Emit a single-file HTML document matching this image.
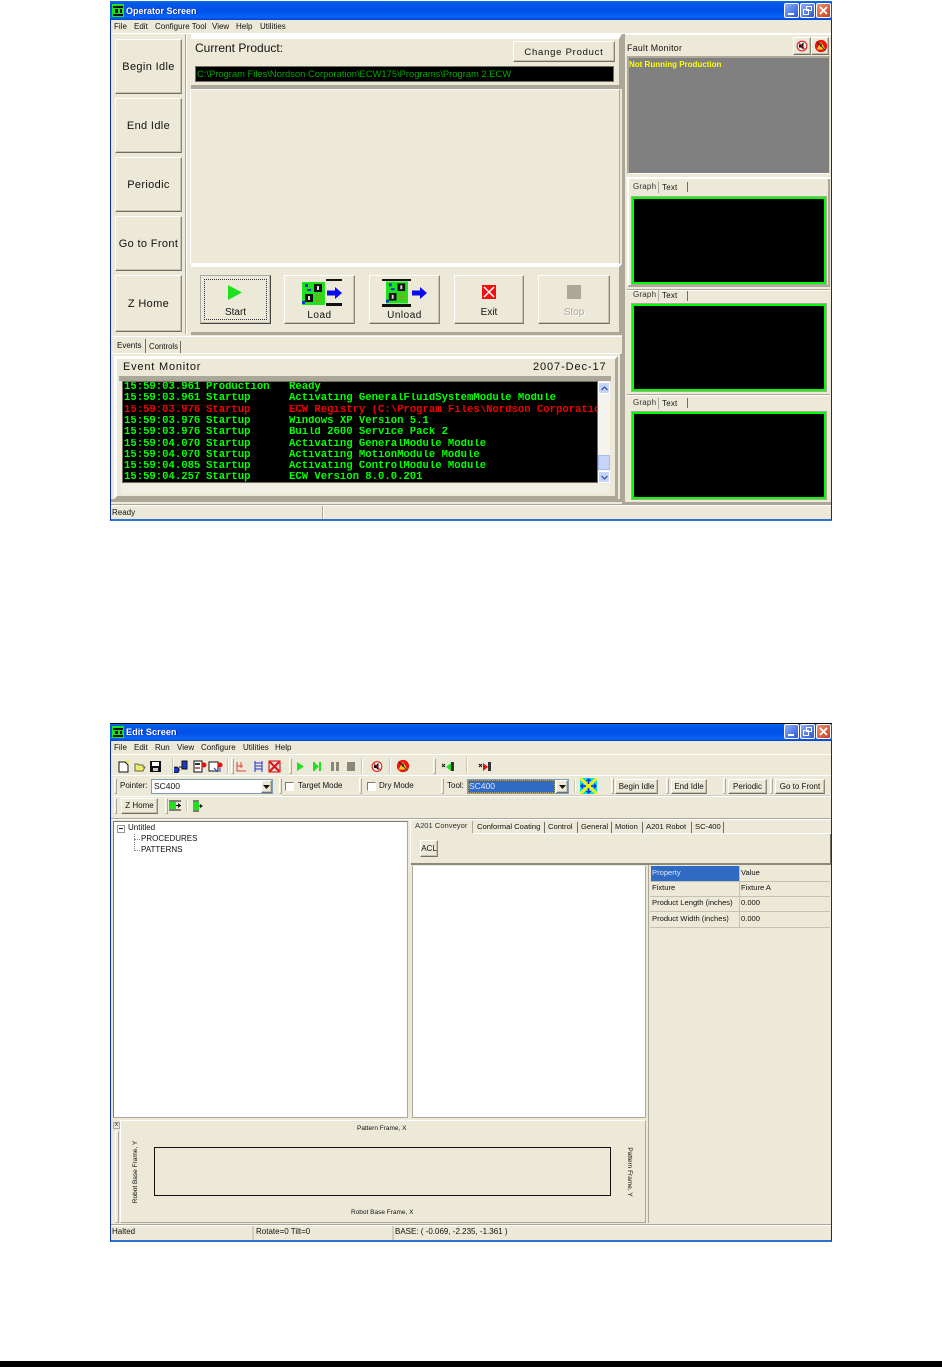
<!DOCTYPE html>
<html><head><meta charset="utf-8"><style>
html,body{margin:0;padding:0;background:#fff}
body{position:relative;width:942px;height:1367px;overflow:hidden;font-family:"Liberation Sans",sans-serif;font-size:8.5px;color:#111}
div,span,svg{position:absolute;box-sizing:border-box;white-space:nowrap}
.bg{background:#ece9d8}
.r{background:#ece9d8;border:1px solid;border-color:#fff #716f64 #716f64 #fff;box-shadow:inset -1px -1px #aca899}
.btn{background:#ece9d8;border:1px solid;border-color:#fff #8a8878 #716f64 #fff;box-shadow:inset -1px -1px #c5c2b2;text-align:center}
.big{font-size:11px;letter-spacing:.35px;display:flex;align-items:center;justify-content:center}
.s{border:1px solid;border-color:#7f7d70 #fff #fff #7f7d70}
.t{line-height:10px}
.title{color:#fff;font-weight:bold;font-size:9px;line-height:12px;text-shadow:1px 0 #0a2a9a}
.tb{background:linear-gradient(#0a70ee 0,#0458e6 12%,#0050ea 50%,#0764f4 85%,#0342cc 100%)}
.wb{width:15px;height:15px;border:1px solid #fff;border-radius:2px;background:linear-gradient(135deg,#8fb0f5,#2a56d8)}
.sep{width:2px;background:#c9c6b6;border-right:1px solid #fff}
.hd{width:3px;background:#ece9d8;border:1px solid;border-color:#fff #aca899 #aca899 #fff}
.row{left:124px;height:11px;font:bold 10.6px/11px "Liberation Mono",monospace;color:#0f0;width:473px;overflow:hidden}
.row span{position:absolute;top:0}
.g{background:#000;border:2px solid #0f0;outline:1px solid #aca899}
.p{font-size:7.6px}
</style></head><body>

<svg width="0" height="0" style="left:0;top:0"><defs>
<symbol id="board" viewBox="0 0 23 23"><rect width="23" height="23" fill="#1fe21f"/><rect x="12" y="2" width="8" height="8" fill="#111"/><rect x="15" y="4" width="2" height="4" fill="#ddd"/><rect x="3" y="12" width="8" height="8" fill="#111"/><rect x="6" y="14" width="2" height="4" fill="#ddd"/><rect x="3" y="2" width="3" height="3" fill="#1030d0"/><rect x="5" y="7" width="4" height="2" fill="#1030d0"/><rect x="0" y="19" width="3" height="3" fill="#1030d0"/><path d="M13 13h7M13 16h7M13 19h7" stroke="#c08020" stroke-width="1"/></symbol>
<symbol id="noaudio" viewBox="0 0 16 16"><circle cx="8" cy="8" r="6.5" fill="#eee" stroke="#e81010" stroke-width="1.4"/><path d="M4 6h3l3-3v10l-3-3H4z" fill="#111"/><path d="M3 3l10 10" stroke="#e81010" stroke-width="1"/></symbol>
<symbol id="nofault" viewBox="0 0 16 16"><circle cx="8" cy="8" r="7" fill="#f01010"/><path d="M8 3l5 9H3z" fill="#f2d020"/><path d="M8 5v4" stroke="#111" stroke-width="1.5"/><path d="M3 3l10 10" stroke="#111" stroke-width="1"/></symbol>
<symbol id="arrow" viewBox="0 0 15 12"><path d="M0 3.5h8V0l7 6-7 6V8.500H0z" fill="#0a0af0"/></symbol>
</defs></svg>

<!-- ============ WINDOW 1 ============ -->
<div class="bg" style="left:110px;top:1px;width:722px;height:520px;border:1px solid #0a2a9a;border-top:0;border-bottom:2px solid #2f71cd"></div>
<div class="tb" style="left:110px;top:1px;width:722px;height:19px"></div>
<svg style="left:112px;top:4px" width="12" height="13"><rect width="12" height="13" fill="#1fe21f"/><rect x="1" y="2" width="10" height="2" fill="#111"/><rect x="1" y="10" width="10" height="2" fill="#111"/><rect x="3" y="5" width="3" height="4" fill="#111"/><rect x="8" y="5" width="2" height="4" fill="#111"/></svg>
<div class="title" style="left:126px;top:5px">Operator Screen</div>
<div class="wb" style="left:784px;top:3px"><div style="left:3px;top:9px;width:6px;height:2px;background:#fff"></div></div>
<div class="wb" style="left:800px;top:3px"><div style="left:5px;top:2px;width:6px;height:5px;border:1px solid #fff"></div><div style="left:2px;top:5px;width:6px;height:6px;border:1px solid #fff"></div></div>
<div class="wb" style="left:816px;top:3px;background:linear-gradient(135deg,#e89878,#c83c18)"><svg style="left:2px;top:2px" width="9" height="9"><path d="M1 1l7 7M8 1l-7 7" stroke="#fff" stroke-width="1.700"/></svg></div>
<div class="t" style="left:114px;top:22px;font-size:8px">File</div>
<div class="t" style="left:134px;top:22px;font-size:8px">Edit</div>
<div class="t" style="left:155px;top:22px;font-size:8px">Configure Tool</div>
<div class="t" style="left:212px;top:22px;font-size:8px">View</div>
<div class="t" style="left:236px;top:22px;font-size:8px">Help</div>
<div class="t" style="left:260px;top:22px;font-size:8px">Utilities</div>
<div style="left:111px;top:33px;width:720px;height:1px;background:#fff"></div>

<div style="left:111px;top:34px;width:76px;height:300px;background:#ece9d8;border-right:2px solid #aca899"></div>
<div style="left:186px;top:34px;width:1px;height:300px;background:#fff"></div>
<div class="btn big" style="left:115px;top:39px;width:67px;height:55px">Begin Idle</div>
<div class="btn big" style="left:115px;top:98px;width:67px;height:55px">End Idle</div>
<div class="btn big" style="left:115px;top:157px;width:67px;height:55px">Periodic</div>
<div class="btn big" style="left:115px;top:216px;width:67px;height:55px">Go to Front</div>
<div class="btn big" style="left:115px;top:275px;width:67px;height:57px">Z Home</div>

<div style="left:191px;top:34px;width:431px;height:55px;background:#ece9d8;border-top:5px solid #fff;border-right:3px solid #aca899;border-bottom:4px solid #aca899"></div>
<div style="left:195px;top:42px;font-size:12px;line-height:13px">Current Product:</div>
<div class="btn" style="left:513px;top:41px;width:102px;height:21px;font-size:9.5px;line-height:21px;letter-spacing:.75px">Change Product</div>
<div style="left:195px;top:66px;width:419px;height:16px;background:#000;border:1px solid #716f64;color:#0a0;font-size:9.400px;line-height:13px;padding-left:1px">C:\Program Files\Nordson Corporation\ECW175\Programs\Program 2.ECW</div>
<div style="left:190px;top:89px;width:430px;height:175px;background:#ece9d8;border:1px solid;border-color:#fff #aca899 #fff #fff"></div>
<div style="left:191px;top:264px;width:431px;height:71px;background:#ece9d8;border-top:3px solid #fff;border-right:3px solid #aca899;border-bottom:3px solid #aca899"></div>

<div class="btn" style="left:200px;top:275px;width:71px;height:49px;border:1px solid #444;border-top-color:#aaa;border-left-color:#aaa"><div style="left:3px;top:3px;right:3px;bottom:3px;border:1px dotted #333"></div></div>
<svg style="left:228px;top:285px" width="15" height="15"><path d="M0 0l14 7.500L0 15z" fill="#1fe21f"/></svg>
<div class="t" style="left:200px;width:71px;top:308px;text-align:center;font-size:10px">Start</div>

<div class="btn" style="left:284px;top:275px;width:71px;height:49px"></div>
<svg style="left:302px;top:281px" width="23" height="25"><use href="#board"/></svg>
<div style="left:326px;top:279px;width:16px;height:2px;background:#111"></div><div style="left:326px;top:303px;width:16px;height:3px;background:#111"></div>
<svg style="left:327px;top:287px" width="15" height="12"><use href="#arrow"/></svg>
<div class="t" style="left:284px;width:71px;top:311px;text-align:center;font-size:10px;letter-spacing:.5px">Load</div>

<div class="btn" style="left:369px;top:275px;width:71px;height:49px"></div>
<div style="left:382px;top:279px;width:29px;height:2px;background:#111"></div><div style="left:382px;top:304px;width:29px;height:3px;background:#111"></div>
<svg style="left:386px;top:281px" width="22" height="23"><use href="#board"/></svg>
<svg style="left:412px;top:287px" width="15" height="12"><use href="#arrow"/></svg>
<div class="t" style="left:369px;width:71px;top:311px;text-align:center;font-size:10px;letter-spacing:.5px">Unload</div>

<div class="btn" style="left:454px;top:275px;width:70px;height:49px"></div>
<svg style="left:482px;top:285px" width="14" height="14"><rect width="14" height="14" fill="#f01010"/><path d="M2 2l10 10M12 2L2 12" stroke="#fff" stroke-width="1.500"/></svg>
<div class="t" style="left:454px;width:70px;top:308px;text-align:center;font-size:10px">Exit</div>

<div class="btn" style="left:538px;top:275px;width:72px;height:49px"></div>
<div style="left:567px;top:285px;width:14px;height:14px;background:#aca899"></div>
<div class="t" style="left:538px;width:72px;top:308px;text-align:center;font-size:10px;color:#aca899;text-shadow:1px 1px #fff">Stop</div>

<!-- events -->
<div style="left:111px;top:353px;width:512px;height:149px;background:#ece9d8;border-top:1px solid #fff;border-right:3px solid #aca899;border-bottom:3px solid #aca899"></div>
<div class="t" style="left:117px;top:341px;font-size:8px">Events</div>
<div style="left:145px;top:339px;width:1px;height:14px;background:#716f64"></div>
<div class="t" style="left:149px;top:342px;font-size:7.800px">Controls</div>
<div style="left:180px;top:341px;width:1px;height:12px;background:#716f64"></div>
<div style="left:111px;top:336px;width:511px;height:1px;background:#fff"></div>
<div style="left:114px;top:356px;width:504px;height:143px;border:3px solid;border-color:#fff #aca899 #aca899 #fff"></div>
<div style="left:123px;top:361px;font-size:11px;line-height:13px;letter-spacing:.8px">Event Monitor</div>
<div style="left:533px;top:361px;font-size:11px;line-height:13px;letter-spacing:.9px">2007-Dec-17</div>
<div style="left:119px;top:376px;width:492px;height:5px;background:#aca899"></div>
<div style="left:122px;top:381px;width:476px;height:102px;background:#000;border:1px solid #716f64"></div>
<div class="row" style="top:382px"><span style="left:0">15:59:03.961</span><span style="left:82px">Production</span><span style="left:165px">Ready</span></div>
<div class="row" style="top:393px"><span style="left:0">15:59:03.961</span><span style="left:82px">Startup</span><span style="left:165px">Activating GeneralFluidSystemModule Module</span></div>
<div class="row" style="top:405px;color:#f00000"><span style="left:0">15:59:03.976</span><span style="left:82px">Startup</span><span style="left:165px">ECW Registry (C:\Program Files\Nordson Corporation</span></div>
<div class="row" style="top:416px"><span style="left:0">15:59:03.976</span><span style="left:82px">Startup</span><span style="left:165px">Windows XP Version 5.1</span></div>
<div class="row" style="top:427px"><span style="left:0">15:59:03.976</span><span style="left:82px">Startup</span><span style="left:165px">Build 2600 Service Pack 2</span></div>
<div class="row" style="top:439px"><span style="left:0">15:59:04.070</span><span style="left:82px">Startup</span><span style="left:165px">Activating GeneralModule Module</span></div>
<div class="row" style="top:450px"><span style="left:0">15:59:04.070</span><span style="left:82px">Startup</span><span style="left:165px">Activating MotionModule Module</span></div>
<div class="row" style="top:461px"><span style="left:0">15:59:04.085</span><span style="left:82px">Startup</span><span style="left:165px">Activating ControlModule Module</span></div>
<div class="row" style="top:472px"><span style="left:0">15:59:04.257</span><span style="left:82px">Startup</span><span style="left:165px">ECW Version 8.0.0.201</span></div>
<div style="left:598px;top:381px;width:12px;height:102px;background:#f4f3ee"></div>
<div style="left:598px;top:382px;width:12px;height:12px;background:#c5d5f8;border:1px solid #fff"><svg style="left:2px;top:3px" width="7" height="5"><path d="M0.500 4l3-3 3 3" fill="none" stroke="#3a5a9a" stroke-width="1.300"/></svg></div>
<div style="left:598px;top:455px;width:12px;height:15px;background:#c5d5f8;border:1px solid #a8bcee"></div>
<div style="left:598px;top:471px;width:12px;height:12px;background:#c5d5f8;border:1px solid #fff"><svg style="left:2px;top:3px" width="7" height="5"><path d="M0.500 1l3 3 3-3" fill="none" stroke="#3a5a9a" stroke-width="1.300"/></svg></div>
<div style="left:121px;top:484px;width:489px;height:10px;background:#f1efe3"></div>

<!-- status 1 -->
<div style="left:111px;top:504px;width:720px;height:1px;background:#aca899"></div>
<div style="left:111px;top:505px;width:720px;height:1px;background:#fff"></div>
<div class="t" style="left:112px;top:508px;font-size:8px">Ready</div>
<div style="left:322px;top:506px;width:2px;height:13px;background:#aca899;border-right:1px solid #fff"></div>

<!-- right col -->
<div style="left:622px;top:34px;width:3px;height:470px;background:#aca899"></div>
<div style="left:626px;top:34px;width:205px;height:1px;background:#fff"></div>
<div class="t" style="left:627px;top:43px;font-size:8.800px;letter-spacing:.3px">Fault Monitor</div>
<div class="btn" style="left:793px;top:37px;width:18px;height:18px"></div>
<div class="btn" style="left:811px;top:37px;width:18px;height:18px"></div>
<svg style="left:796px;top:40px" width="12" height="12"><use href="#noaudio"/></svg>
<svg style="left:814px;top:39px" width="14" height="14"><use href="#nofault"/></svg>
<div style="left:627px;top:56px;width:203px;height:118px;background:#808080;border:1px solid;border-width:2px 1px 1px 2px;border-color:#aca899 #d8d6c8 #fff #aca899;color:#ff0;font-weight:bold;font-size:8px;line-height:12px"><span style="left:0;top:1px">Not Running Production</span></div>
<div style="left:626px;top:177px;width:205px;height:2px;background:#fff"></div>

<div style="left:627px;top:179px;width:203px;height:108px;border:2px solid;border-color:#fff #aca899 #aca899 #fff;border-top:0"></div>
<div class="t" style="left:633px;top:182px;font-size:8px;letter-spacing:.2px;color:#333">Graph</div>
<div style="left:658px;top:182px;width:1px;height:11px;background:#aaa"></div>
<div class="t" style="left:662px;top:183px;font-size:8px;letter-spacing:.2px">Text</div>
<div style="left:687px;top:182px;width:1px;height:10px;background:#716f64"></div>
<div class="g" style="left:632px;top:197px;width:194px;height:87px"></div>

<div style="left:627px;top:289px;width:203px;height:1px;background:#aca899"></div>
<div style="left:627px;top:290px;width:203px;height:1px;background:#fff"></div>
<div class="t" style="left:633px;top:290px;font-size:8px;letter-spacing:.2px;color:#333">Graph</div>
<div style="left:658px;top:290px;width:1px;height:11px;background:#aaa"></div>
<div class="t" style="left:662px;top:291px;font-size:8px;letter-spacing:.2px">Text</div>
<div style="left:687px;top:291px;width:1px;height:10px;background:#716f64"></div>
<div class="g" style="left:632px;top:304px;width:194px;height:87px"></div>

<div style="left:627px;top:394px;width:203px;height:1px;background:#aca899"></div>
<div style="left:627px;top:395px;width:203px;height:1px;background:#fff"></div>
<div class="t" style="left:633px;top:398px;font-size:8px;letter-spacing:.2px;color:#333">Graph</div>
<div style="left:658px;top:398px;width:1px;height:11px;background:#aaa"></div>
<div class="t" style="left:662px;top:399px;font-size:8px;letter-spacing:.2px">Text</div>
<div style="left:687px;top:398px;width:1px;height:10px;background:#716f64"></div>
<div class="g" style="left:632px;top:412px;width:194px;height:87px"></div>
<div style="left:625px;top:502px;width:206px;height:2px;background:#aca899"></div>

<!-- ============ WINDOW 2 ============ -->
<div class="bg" style="left:110px;top:723px;width:722px;height:519px;border:1px solid #0a2a9a;border-top:0;border-bottom:2px solid #2f71cd"></div>
<div class="tb" style="left:110px;top:723px;width:722px;height:18px;border-top:1px solid #000"></div>
<svg style="left:112px;top:726px" width="12" height="12"><rect width="12" height="12" fill="#1fe21f"/><rect x="1" y="2" width="10" height="2" fill="#111"/><rect x="1" y="9" width="10" height="2" fill="#111"/><rect x="3" y="5" width="3" height="3" fill="#111"/><rect x="8" y="5" width="2" height="3" fill="#111"/></svg>
<div class="title" style="left:126px;top:726px;font-size:9.200px">Edit Screen</div>
<div class="wb" style="left:784px;top:724px"><div style="left:3px;top:9px;width:6px;height:2px;background:#fff"></div></div>
<div class="wb" style="left:800px;top:724px"><div style="left:5px;top:2px;width:6px;height:5px;border:1px solid #fff"></div><div style="left:2px;top:5px;width:6px;height:6px;border:1px solid #fff"></div></div>
<div class="wb" style="left:816px;top:724px;background:linear-gradient(135deg,#e89878,#c83c18)"><svg style="left:2px;top:2px" width="9" height="9"><path d="M1 1l7 7M8 1l-7 7" stroke="#fff" stroke-width="1.700"/></svg></div>
<div class="t" style="left:114px;top:743px;font-size:8px">File</div>
<div class="t" style="left:134px;top:743px;font-size:8px">Edit</div>
<div class="t" style="left:155px;top:743px;font-size:8px">Run</div>
<div class="t" style="left:177px;top:743px;font-size:8px">View</div>
<div class="t" style="left:201px;top:743px;font-size:8px">Configure</div>
<div class="t" style="left:243px;top:743px;font-size:8px">Utilities</div>
<div class="t" style="left:275px;top:743px;font-size:8px">Help</div>
<div style="left:111px;top:754px;width:720px;height:1px;background:#fff"></div>
<div style="left:111px;top:775px;width:720px;height:1px;background:#fff"></div>
<div style="left:111px;top:796px;width:720px;height:1px;background:#fff"></div>
<div style="left:111px;top:818px;width:720px;height:1px;background:#aca899"></div>
<div style="left:111px;top:819px;width:720px;height:1px;background:#fff"></div>

<!-- toolbar 1 icons -->
<svg style="left:117px;top:760px" width="240" height="13">
<path d="M2 2h6l3 3v7H2z" fill="#fff" stroke="#111"/><path d="M8 1l3 1M11 0v3" stroke="#ee0"/>
<path d="M18 10V4h3l1 1h4v2h2l-2 4H18z" fill="#ee6" stroke="#665"/>
<rect x="33" y="1" width="11" height="11" fill="#111"/><rect x="35" y="2" width="7" height="4" fill="#fff"/><rect x="36" y="8" width="5" height="3" fill="#ccc"/>
<path d="M59 7a3 3 0 1 0 .1 0M65 1h5v8h-5z" fill="#1a3ad0" stroke="#111"/><path d="M62 7h3" stroke="#111"/>
<rect x="77" y="1" width="8" height="11" fill="#fff" stroke="#111"/><rect x="78" y="3" width="5" height="2" fill="#333"/><rect x="78" y="7" width="5" height="2" fill="#c66"/><circle cx="87" cy="5" r="2.500" fill="#e01010"/>
<rect x="92" y="2" width="9" height="9" fill="#fff" stroke="#111"/><circle cx="103" cy="5" r="2.500" fill="#e01010"/><path d="M97 8l4 4M103 8v4" stroke="#1a3ad0"/>
<path d="M120 2v9h9M124 2v6M120 6h6" fill="none" stroke="#e04040"/>
<path d="M138 1v11M145 1v11M138 3h7M138 6h7M138 9h7" stroke="#2030e0" fill="none"/>
<rect x="152" y="1" width="11" height="11" fill="#ddd" stroke="#c00"/><path d="M153 2l9 9M162 2l-9 9" stroke="#e01010" stroke-width="2"/>
<path d="M180 2l7 4.500-7 4.500z" fill="#1fe21f"/>
<path d="M197 2l5 4.500-5 4.500z" fill="#1fe21f"/><rect x="202" y="2" width="2" height="9" fill="#1fe21f"/><rect x="196" y="2" width="2" height="9" fill="#1fe21f"/>
<rect x="214" y="2" width="3" height="9" fill="#8a8878"/><rect x="219" y="2" width="3" height="9" fill="#8a8878"/>
<rect x="230" y="2" width="8" height="9" fill="#8a8878"/>
</svg>
<svg style="left:371px;top:760px" width="12" height="13"><use href="#noaudio"/></svg>
<svg style="left:396px;top:759px" width="14" height="14"><use href="#nofault"/></svg>
<svg style="left:441px;top:761px" width="14" height="11"><path d="M1 3l3 3M4 3L1 6" stroke="#111"/><path d="M10 2v8L5 6z" fill="#1fe21f"/><rect x="10" y="1" width="3" height="9" fill="#333"/></svg>
<svg style="left:478px;top:761px" width="14" height="11"><path d="M1 3l3 3M4 3L1 6" stroke="#111"/><path d="M5 2v8l5-4z" fill="#e01010"/><rect x="10" y="1" width="3" height="9" fill="#333"/></svg>
<div class="sep" style="left:172px;top:758px;height:16px"></div>
<div class="sep" style="left:227px;top:758px;height:16px"></div>
<div class="hd" style="left:231px;top:758px;height:16px"></div>
<div class="hd" style="left:289px;top:758px;height:16px"></div>
<div class="sep" style="left:361px;top:758px;height:16px"></div>
<div class="sep" style="left:389px;top:758px;height:16px"></div>
<div class="hd" style="left:433px;top:758px;height:16px"></div>
<div class="sep" style="left:466px;top:758px;height:16px"></div>

<!-- toolbar 2 -->
<div class="hd" style="left:114px;top:778px;height:16px"></div>
<div class="t" style="left:120px;top:781px;font-size:8px">Pointer:</div>
<div style="left:151px;top:779px;width:122px;height:15px;background:#fff;border:1px solid #7f9db9;font-size:8.500px;line-height:13px;padding-left:2px">SC400</div>
<div class="btn" style="left:261px;top:780px;width:11px;height:13px"><svg style="left:1px;top:4px" width="7" height="4"><path d="M0 0h7L3.500 4z" fill="#111"/></svg></div>
<div class="hd" style="left:279px;top:778px;height:16px"></div>
<div class="s" style="left:285px;top:782px;width:9px;height:9px;background:#fff"></div>
<div class="t" style="left:298px;top:781px;font-size:8px">Target Mode</div>
<div class="hd" style="left:359px;top:778px;height:16px"></div>
<div class="s" style="left:367px;top:782px;width:9px;height:9px;background:#fff"></div>
<div class="t" style="left:379px;top:781px;font-size:8px">Dry Mode</div>
<div class="hd" style="left:441px;top:778px;height:16px"></div>
<div class="t" style="left:447px;top:781px;font-size:8px">Tool:</div>
<div style="left:467px;top:779px;width:102px;height:15px;background:#fff;border:1px solid #7f9db9"></div>
<div style="left:468px;top:780px;width:87px;height:13px;background:#316ac5;color:#dfe6f8;font-size:8.500px;line-height:12px;padding-left:1px;outline:1px dotted #c8a030;outline-offset:-1px">SC400</div>
<div class="btn" style="left:556px;top:780px;width:12px;height:13px"><svg style="left:2px;top:4px" width="7" height="4"><path d="M0 0h7L3.500 4z" fill="#111"/></svg></div>
<div class="sep" style="left:574px;top:779px;height:14px"></div>
<svg style="left:580px;top:778px" width="17" height="16"><rect width="17" height="16" fill="#00e0e0"/><path d="M0 0l17 16M17 0L0 16" stroke="#f0f020" stroke-width="3"/><path d="M8.500 0l3 3h-6zM8.500 16l3-3h-6zM0 8l3-3v6zM17 8l-3-3v6z" fill="#1030e0"/><path d="M8.500 3v3M8.500 13v-3M3 8h3M14 8h-3" stroke="#1030e0" stroke-width="1.500"/></svg>
<div class="hd" style="left:611px;top:778px;height:16px"></div>
<div class="btn" style="left:615px;top:779px;width:43px;height:15px;font-size:8px;line-height:13px">Begin Idle</div>
<div class="hd" style="left:666px;top:778px;height:16px"></div>
<div class="btn" style="left:671px;top:779px;width:36px;height:15px;font-size:8px;line-height:13px">End Idle</div>
<div class="hd" style="left:723px;top:778px;height:16px"></div>
<div class="btn" style="left:728px;top:779px;width:39px;height:15px;font-size:8px;line-height:13px">Periodic</div>
<div class="hd" style="left:770px;top:778px;height:16px"></div>
<div class="btn" style="left:775px;top:779px;width:50px;height:15px;font-size:8px;line-height:13px">Go to Front</div>
<div style="left:282px;top:795px;width:548px;height:1px;background:#d0cdbd"></div>

<!-- toolbar 3 -->
<div class="hd" style="left:114px;top:798px;height:16px"></div>
<div class="btn" style="left:121px;top:798px;width:37px;height:16px;font-size:8px;line-height:14px">Z Home</div>
<div class="hd" style="left:165px;top:798px;height:16px"></div>
<svg style="left:169px;top:800px" width="13" height="11"><rect x="0" y="2" width="7" height="7" fill="#1fe21f"/><path d="M0 1h12M0 10h12M7 5.500h5" stroke="#111"/><path d="M9 3l3 2.500-3 2.500z" fill="#111"/></svg>
<div class="sep" style="left:186px;top:799px;height:13px"></div>
<svg style="left:192px;top:800px" width="12" height="12"><rect x="1" y="2" width="6" height="8" fill="#1fe21f"/><path d="M1 1h6M1 11h6M7 6h3" stroke="#111"/><path d="M8 4l3 2-3 2z" fill="#111"/></svg>

<!-- tree -->
<div style="left:113px;top:821px;width:295px;height:297px;background:#fff;border:1px solid #7f7d70;border-right-color:#aca899;border-bottom-color:#aca899"></div>
<div style="left:117px;top:825px;width:8px;height:8px;border:1px solid #999;background:#fff"><div style="left:1px;top:2px;width:4px;height:1px;background:#222"></div></div>
<div class="t" style="left:128px;top:823px;font-size:8px">Untitled</div>
<div style="left:134px;top:834px;width:0;height:17px;border-left:1px dotted #888"></div>
<div style="left:134px;top:839px;width:6px;border-top:1px dotted #888"></div>
<div style="left:134px;top:850px;width:6px;border-top:1px dotted #888"></div>
<div class="t" style="left:141px;top:834px;font-size:8px">PROCEDURES</div>
<div class="t" style="left:141px;top:845px;font-size:8px">PATTERNS</div>

<!-- tabs -->
<div style="left:410px;top:820px;width:1px;height:43px;background:#fff"></div>
<div class="t p" style="left:415px;top:821px;color:#333">A201 Conveyor</div>
<div style="left:472px;top:821px;width:1px;height:12px;background:#aca899"></div>
<div class="t p" style="left:477px;top:822px">Conformal Coating</div>
<div style="left:544px;top:822px;width:1px;height:11px;background:#716f64"></div>
<div class="t p" style="left:548px;top:822px">Control</div>
<div style="left:577px;top:822px;width:1px;height:11px;background:#716f64"></div>
<div class="t p" style="left:581px;top:822px">General</div>
<div style="left:611px;top:822px;width:1px;height:11px;background:#716f64"></div>
<div class="t p" style="left:615px;top:822px">Motion</div>
<div style="left:642px;top:822px;width:1px;height:11px;background:#716f64"></div>
<div class="t p" style="left:646px;top:822px">A201 Robot</div>
<div style="left:691px;top:822px;width:1px;height:11px;background:#716f64"></div>
<div class="t p" style="left:695px;top:822px">SC-400</div>
<div style="left:723px;top:822px;width:1px;height:11px;background:#716f64"></div>
<div style="left:473px;top:833px;width:358px;height:1px;background:#fff"></div>
<div style="left:830px;top:834px;width:1px;height:30px;background:#716f64"></div>
<div class="btn" style="left:420px;top:840px;width:18px;height:17px;font-size:8px;line-height:15px">ACL</div>
<div style="left:411px;top:863px;width:420px;height:2px;background:#8a8878"></div>

<div style="left:412px;top:866px;width:234px;height:252px;background:#fff;border:1px solid #aca899;border-top:0"></div>

<!-- props -->
<div style="left:648px;top:865px;width:1px;height:358px;background:#aca899"></div>
<div class="p" style="left:651px;top:866px;width:88px;height:15px;background:#316ac5;color:#dde6f8;line-height:14px;padding-left:1px">Property</div>
<div class="t p" style="left:741px;top:868px">Value</div>
<div class="t p" style="left:652px;top:883px">Fixture</div>
<div class="t p" style="left:741px;top:883px">Fixture A</div>
<div class="t p" style="left:652px;top:898px">Product Length (inches)</div>
<div class="t p" style="left:741px;top:898px">0.000</div>
<div class="t p" style="left:652px;top:914px">Product Width (inches)</div>
<div class="t p" style="left:741px;top:914px">0.000</div>
<div style="left:650px;top:881px;width:180px;height:1px;background:#c5c2b2"></div>
<div style="left:650px;top:896px;width:180px;height:1px;background:#c5c2b2"></div>
<div style="left:650px;top:911px;width:180px;height:1px;background:#c5c2b2"></div>
<div style="left:650px;top:927px;width:180px;height:1px;background:#c5c2b2"></div>
<div style="left:739px;top:866px;width:1px;height:62px;background:#c5c2b2"></div>

<!-- bottom panel -->
<div style="left:113px;top:1122px;width:7px;height:7px;background:#ece9d8;border:1px solid #aca899;font-size:6px;line-height:5px;text-align:center">x</div>
<div style="left:115px;top:1131px;width:4px;height:92px;background:#ece9d8;border:1px solid;border-color:#fff #aca899 #aca899 #fff"></div>
<div style="left:120px;top:1120px;width:526px;height:103px;border:1px solid;border-color:#fff #aca899 #aca899 #fff"></div>
<div class="t" style="left:357px;top:1124px;font-size:6.500px">Pattern Frame, X</div>
<div class="t" style="left:351px;top:1208px;font-size:6.500px">Robot Base Frame, X</div>
<div style="left:154px;top:1147px;width:457px;height:49px;border:1.500px solid #111"></div>
<div class="t" style="left:136px;top:1172px;font-size:6.500px;transform:translate(-50%,-50%) rotate(-90deg)">Robot Base Frame, Y</div>
<div class="t" style="left:629px;top:1172px;font-size:6.500px;transform:translate(-50%,-50%) rotate(90deg)">Pattern Frame, Y</div>

<!-- status 2 -->
<div style="left:111px;top:1224px;width:720px;height:1px;background:#aca899"></div>
<div style="left:111px;top:1225px;width:720px;height:1px;background:#fff"></div>
<div class="t" style="left:112px;top:1227px;font-size:8px">Halted</div>
<div style="left:252px;top:1226px;width:2px;height:14px;background:#d0cdbd"></div>
<div class="t" style="left:256px;top:1227px;font-size:8px">Rotate=0 Tilt=0</div>
<div style="left:392px;top:1226px;width:2px;height:14px;background:#d0cdbd"></div>
<div class="t" style="left:395px;top:1227px;font-size:8px">BASE: ( -0.069, -2.235, -1.361 )</div>

<div style="left:0;top:1361px;width:942px;height:6px;background:#000"></div>
</body></html>
